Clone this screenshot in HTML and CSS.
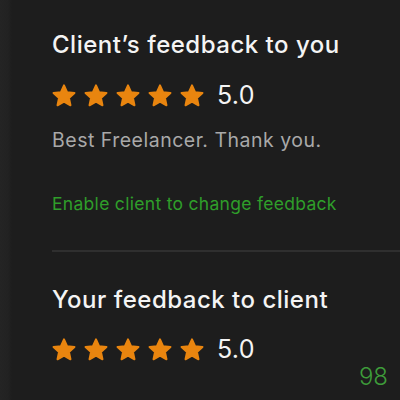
FILE: index.html
```html
<!DOCTYPE html>
<html lang="en">
  <head>
    <meta charset="UTF-8" />
    <meta name="viewport" content="width=device-width, initial-scale=1.0" />
    <title>Feedback</title>
    <link rel="stylesheet" href="styles.css">
  </head>
  <body>
    <div class="panel">
      <section class="feedback">
        <h2 class="feedback-title">Client’s feedback to you</h2>
        <div class="rating">
          <svg class="star" viewBox="0 0 24 23"><path d="M12 1.4 L15.06 8.19 L22.46 9 L16.95 14.01 L18.47 21.3 L12 17.6 L5.53 21.3 L7.05 14.01 L1.54 9 L8.94 8.19 Z" /></svg>
          <svg class="star" viewBox="0 0 24 23"><path d="M12 1.4 L15.06 8.19 L22.46 9 L16.95 14.01 L18.47 21.3 L12 17.6 L5.53 21.3 L7.05 14.01 L1.54 9 L8.94 8.19 Z" /></svg>
          <svg class="star" viewBox="0 0 24 23"><path d="M12 1.4 L15.06 8.19 L22.46 9 L16.95 14.01 L18.47 21.3 L12 17.6 L5.53 21.3 L7.05 14.01 L1.54 9 L8.94 8.19 Z" /></svg>
          <svg class="star" viewBox="0 0 24 23"><path d="M12 1.4 L15.06 8.19 L22.46 9 L16.95 14.01 L18.47 21.3 L12 17.6 L5.53 21.3 L7.05 14.01 L1.54 9 L8.94 8.19 Z" /></svg>
          <svg class="star" viewBox="0 0 24 23"><path d="M12 1.4 L15.06 8.19 L22.46 9 L16.95 14.01 L18.47 21.3 L12 17.6 L5.53 21.3 L7.05 14.01 L1.54 9 L8.94 8.19 Z" /></svg>
          <span class="score">5.0</span>
        </div>
        <p class="comment">Best Freelancer. Thank you.</p>
        <a class="enable" href="#">Enable client to change feedback</a>
      </section>

      <hr class="divider" />

      <section class="feedback second">
        <h2 class="feedback-title">Your feedback to client</h2>
        <div class="rating">
          <svg class="star" viewBox="0 0 24 23"><path d="M12 1.4 L15.06 8.19 L22.46 9 L16.95 14.01 L18.47 21.3 L12 17.6 L5.53 21.3 L7.05 14.01 L1.54 9 L8.94 8.19 Z" /></svg>
          <svg class="star" viewBox="0 0 24 23"><path d="M12 1.4 L15.06 8.19 L22.46 9 L16.95 14.01 L18.47 21.3 L12 17.6 L5.53 21.3 L7.05 14.01 L1.54 9 L8.94 8.19 Z" /></svg>
          <svg class="star" viewBox="0 0 24 23"><path d="M12 1.4 L15.06 8.19 L22.46 9 L16.95 14.01 L18.47 21.3 L12 17.6 L5.53 21.3 L7.05 14.01 L1.54 9 L8.94 8.19 Z" /></svg>
          <svg class="star" viewBox="0 0 24 23"><path d="M12 1.4 L15.06 8.19 L22.46 9 L16.95 14.01 L18.47 21.3 L12 17.6 L5.53 21.3 L7.05 14.01 L1.54 9 L8.94 8.19 Z" /></svg>
          <svg class="star" viewBox="0 0 24 23"><path d="M12 1.4 L15.06 8.19 L22.46 9 L16.95 14.01 L18.47 21.3 L12 17.6 L5.53 21.3 L7.05 14.01 L1.54 9 L8.94 8.19 Z" /></svg>
          <span class="score">5.0</span>
        </div>
      </section>

      <div class="page-count">98</div>
    </div>
  </body>
</html>
```

FILE: styles.css
```css
* {
  margin: 0;
  padding: 0;
  box-sizing: border-box;
  font-family: "Inter", "Liberation Sans", sans-serif;
}

body {
  background: #1d1d1d;
  width: 400px;
  height: 400px;
  overflow: hidden;
}

.panel {
  height: 400px;
  display: flex;
  flex-direction: column;
  background: linear-gradient(to right, #242424 0, #222 8px, #1d1d1d 12px);
}

.feedback {
  padding: 30px 0 0 52px;
  display: flex;
  flex-direction: column;
  align-items: flex-start;
}

.feedback.second {
  padding-top: 33px;
}

.feedback-title {
  font-size: 24px;
  line-height: 30px;
  font-weight: 500;
  letter-spacing: 0.5px;
  color: #f4f4f4;
}

.rating {
  display: flex;
  align-items: center;
  gap: 8px;
  height: 24px;
  margin-top: 23px;
}

.second .rating {
  margin-top: 22px;
}

.star {
  width: 24px;
  height: 23px;
  overflow: visible;
}

.star path {
  fill: #e9850f;
  stroke: #e9850f;
  stroke-width: 2;
  stroke-linejoin: round;
}

.score {
  margin-left: 5px;
  font-size: 25px;
  line-height: 24px;
  letter-spacing: 0.3px;
  color: #f4f4f4;
}

.comment {
  margin-top: 21px;
  font-size: 19.5px;
  line-height: 24px;
  letter-spacing: 0.5px;
  color: #a9a9a9;
}

.enable {
  margin-top: 41px;
  font-size: 17.5px;
  line-height: 22px;
  letter-spacing: 0.3px;
  color: #2f9e2a;
  text-decoration: none;
}

.divider {
  margin: 35px 0 0 52px;
  border: none;
  height: 2px;
  background: #2f2f2f;
}

.page-count {
  align-self: flex-end;
  margin: 4px 12px 0 0;
  font-size: 24px;
  line-height: 24px;
  font-weight: 300;
  color: #3e9c3a;
}
```
